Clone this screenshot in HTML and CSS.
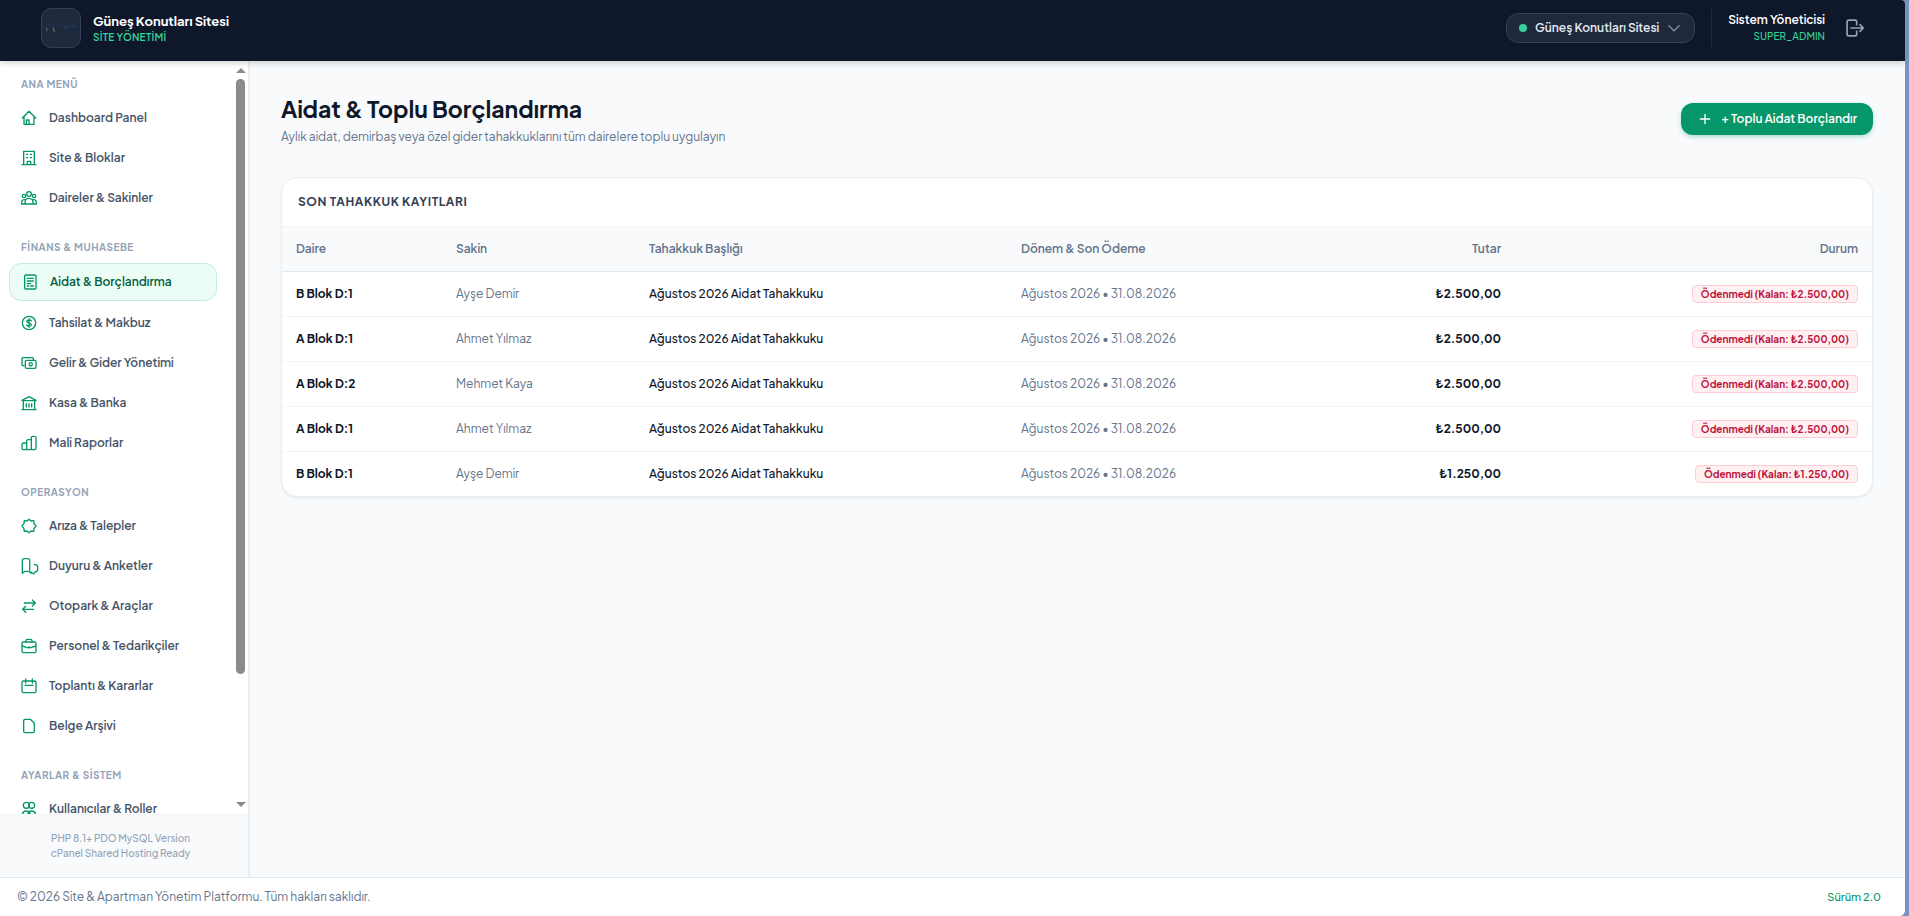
FILE: index.html
```
<!DOCTYPE html>
<html lang="tr">
<head>
    <meta charset="UTF-8">
    <meta name="viewport" content="width=device-width, initial-scale=1.0">
    <title>Aidat &amp; Toplu Borçlandırma</title>
    <link rel="stylesheet" href="styles.css">
</head>
<body>
    <div class="app">
        <header class="topbar">
            <a class="brand" href="#">
                <span class="brand-logo">
                    <svg viewBox="0 0 40 40">
                        <path d="M4 17q4-2 9 0M17 17h8" stroke="#22344f"/>
                        <path d="M5 20v3" stroke="#64748b"/>
                        <path d="M12 20l1 4" stroke="#7c8a6a"/>
                        <path d="M23 18l3 3 3-3M31 18h3" stroke="#1e4a86"/>
                    </svg>
                </span>
                <span class="brand-text">
                    <strong>Güneş Konutları Sitesi</strong>
                    <small>SİTE YÖNETİMİ</small>
                </span>
            </a>
            <div class="topbar-right">
                <button class="site-select" type="button">
                    <span class="dot"></span>
                    Güneş Konutları Sitesi
                    <svg class="icon" viewBox="0 0 24 24"><path d="M3 8l9 9 9-9"/></svg>
                </button>
                <div class="user">
                    <div class="user-text">
                        <strong>Sistem Yöneticisi</strong>
                        <small>SUPER_ADMIN</small>
                    </div>
                    <button class="logout" type="button" aria-label="Çıkış">
                        <svg viewBox="0 0 24 24"><path d="M14 8V4.500a2 2 0 0 0-2-2H4.500a2 2 0 0 0-2 2v15a2 2 0 0 0 2 2H12a2 2 0 0 0 2-2V16M7 12h15M18 8l4 4-4 4"/></svg>
                    </button>
                </div>
            </div>
        </header>

        <div class="layout">
            <aside class="sidebar">
                <div class="sidebar-body">
                    <nav class="menu">
                        <div class="menu-group">
                            <h2>ANA MENÜ</h2>
                            <ul>
                                <li><a href="#"><svg class="icon" viewBox="0 0 24 24"><path d="M2 12L12 2l10 10M4.500 10v11.500h15V10M8 21v-6h4v6"/></svg>Dashboard Panel</a></li>
                                <li><a href="#"><svg class="icon" viewBox="0 0 24 24"><path d="M1.500 22h21M4 22V2h16v20M9.500 22v-5h5v5M8 6.500h2M14 6.500h2M8 11.500h2M14 11.500h2"/></svg>Site &amp; Bloklar</a></li>
                                <li><a href="#"><svg class="icon" viewBox="0 0 24 24"><circle cx="12" cy="6" r="3.500"/><circle cx="4.500" cy="9" r="2.500"/><circle cx="19.500" cy="9" r="2.500"/><path d="M6 21v-2.500a6 6 0 0 1 12 0V21zM6 21H1v-3a4 4 0 0 1 5-3.500M18 21h5v-3a4 4 0 0 0-5-3.500"/></svg>Daireler &amp; Sakinler</a></li>
                            </ul>
                        </div>
                        <div class="menu-group">
                            <h2>FİNANS &amp; MUHASEBE</h2>
                            <ul>
                                <li><a class="active" href="#"><svg class="icon" viewBox="0 0 24 24"><rect x="4" y="1.500" width="17" height="21" rx="2"/><path d="M8 6.500h9M8 10.500h9M8 14.500h5M8 18h2M13 18h4"/></svg>Aidat &amp; Borçlandırma</a></li>
                                <li><a href="#"><svg class="icon" viewBox="0 0 24 24"><circle cx="12" cy="12" r="10"/><path d="M12 5.500v13M15.500 9c-1-2-7-2-7 .500s7 2 7 5-6 3-7 .500"/></svg>Tahsilat &amp; Makbuz</a></li>
                                <li><a href="#"><svg class="icon" viewBox="0 0 24 24"><path d="M4.500 16H3a1.500 1.500 0 0 1-1.500-1.500v-9A1.500 1.500 0 0 1 3 4h14a1.500 1.500 0 0 1 1.500 1.500V8"/><rect x="6.500" y="8" width="16" height="12" rx="2"/><circle cx="14.500" cy="14" r="2.500"/></svg>Gelir &amp; Gider Yönetimi</a></li>
                                <li><a href="#"><svg class="icon" viewBox="0 0 24 24"><path d="M1.500 8L12 2.500 22.500 8M2 8.500h20M3.500 9v12.500M20.500 9v12.500M1.500 22h21M8 13v5M12 13v5M16 13v5"/></svg>Kasa &amp; Banka</a></li>
                                <li><a href="#"><svg class="icon" viewBox="0 0 24 24"><path d="M8.500 22h-5a2 2 0 0 1-2-2v-6a2 2 0 0 1 2-2h5zM8.500 22V9a2 2 0 0 1 2-2h5v15zM15.500 22V4a2 2 0 0 1 2-2h3a2 2 0 0 1 2 2v16a2 2 0 0 1-2 2z"/></svg>Mali Raporlar</a></li>
                            </ul>
                        </div>
                        <div class="menu-group">
                            <h2>OPERASYON</h2>
                            <ul>
                                <li><a href="#"><svg class="icon" viewBox="0 0 24 24"><path d="M12 2l3 2.500 4-.500.500 4 3 4-3 4-.500 4-4-.500L12 22l-3-2.500-4 .500-.500-4-3-4 3-4L5 4l4 .500z"/></svg>Arıza &amp; Talepler</a></li>
                                <li><a href="#"><svg class="icon" viewBox="0 0 24 24"><path d="M2 23V4a3 3 0 0 1 3-3h5a3 3 0 0 1 3 3v14M2 23l4-3h6l3 3M20 10h1a4 4 0 0 1 4 4v3a4 4 0 0 1-4 4l-2 3-4-3"/></svg>Duyuru &amp; Anketler</a></li>
                                <li><a href="#"><svg class="icon" viewBox="0 0 24 24"><path d="M5 7.500h16M17 3l4.500 4.500L17 12M19 17H3M7 12.500L2.500 17 7 21.500"/></svg>Otopark &amp; Araçlar</a></li>
                                <li><a href="#"><svg class="icon" viewBox="0 0 24 24"><rect x="1.500" y="6" width="21" height="16" rx="2"/><path d="M7.500 6V4a2 2 0 0 1 2-2h5a2 2 0 0 1 2 2v2M2 12l7 2.500h6l7-2.500M12 13v2"/></svg>Personel &amp; Tedarikçiler</a></li>
                                <li><a href="#"><svg class="icon" viewBox="0 0 24 24"><rect x="1.500" y="4.500" width="21" height="17.500" rx="2"/><path d="M7 1.500v6M17 1.500v6M6 11h12"/></svg>Toplantı &amp; Kararlar</a></li>
                                <li><a href="#"><svg class="icon" viewBox="0 0 24 24"><path d="M6 2h8l6 6v12a2 2 0 0 1-2 2H6a2 2 0 0 1-2-2V4a2 2 0 0 1 2-2z"/></svg>Belge Arşivi</a></li>
                            </ul>
                        </div>
                        <div class="menu-group">
                            <h2>AYARLAR &amp; SİSTEM</h2>
                            <ul>
                                <li><a href="#"><svg class="icon" viewBox="0 0 24 24"><circle cx="8" cy="6.500" r="4.500"/><circle cx="16" cy="6.500" r="4.500"/><path d="M2 22c0-5 2.500-7 6-7s6 2 6 7M10 22c0-5 2.500-7 6-7s6 2 6 7"/></svg>Kullanıcılar &amp; Roller</a></li>
                            </ul>
                        </div>
                    </nav>
                    <div class="scrollbar">
                        <span class="arrow up"></span>
                        <div class="track"><div class="thumb"></div></div>
                        <span class="arrow down"></span>
                    </div>
                </div>
                <div class="sidebar-foot">
                    <p>PHP 8.1+ PDO MySQL Version</p>
                    <p>cPanel Shared Hosting Ready</p>
                </div>
            </aside>

            <main class="content">
                <div class="page-head">
                    <div>
                        <h1>Aidat &amp; Toplu Borçlandırma</h1>
                        <p>Aylık aidat, demirbaş veya özel gider tahakkuklarını tüm dairelere toplu uygulayın</p>
                    </div>
                    <button class="btn-add" type="button">
                        <svg class="icon" viewBox="0 0 24 24"><path d="M12 5v14M5 12h14"/></svg>
                        + Toplu Aidat Borçlandır
                    </button>
                </div>

                <section class="card">
                    <h3>SON TAHAKKUK KAYITLARI</h3>
                    <table>
                        <colgroup>
                            <col class="c-daire">
                            <col class="c-sakin">
                            <col class="c-baslik">
                            <col class="c-donem">
                            <col class="c-tutar">
                            <col class="c-durum">
                        </colgroup>
                        <thead>
                            <tr>
                                <th>Daire</th>
                                <th>Sakin</th>
                                <th>Tahakkuk Başlığı</th>
                                <th>Dönem &amp; Son Ödeme</th>
                                <th class="right">Tutar</th>
                                <th class="right">Durum</th>
                            </tr>
                        </thead>
                        <tbody>
                            <tr>
                                <td class="flat">B Blok D:1</td>
                                <td class="muted">Ayşe Demir</td>
                                <td>Ağustos 2026 Aidat Tahakkuku</td>
                                <td class="muted">Ağustos 2026 • 31.08.2026</td>
                                <td class="amount">₺2.500,00</td>
                                <td class="right"><span class="badge">Ödenmedi (Kalan: ₺2.500,00)</span></td>
                            </tr>
                            <tr>
                                <td class="flat">A Blok D:1</td>
                                <td class="muted">Ahmet Yılmaz</td>
                                <td>Ağustos 2026 Aidat Tahakkuku</td>
                                <td class="muted">Ağustos 2026 • 31.08.2026</td>
                                <td class="amount">₺2.500,00</td>
                                <td class="right"><span class="badge">Ödenmedi (Kalan: ₺2.500,00)</span></td>
                            </tr>
                            <tr>
                                <td class="flat">A Blok D:2</td>
                                <td class="muted">Mehmet Kaya</td>
                                <td>Ağustos 2026 Aidat Tahakkuku</td>
                                <td class="muted">Ağustos 2026 • 31.08.2026</td>
                                <td class="amount">₺2.500,00</td>
                                <td class="right"><span class="badge">Ödenmedi (Kalan: ₺2.500,00)</span></td>
                            </tr>
                            <tr>
                                <td class="flat">A Blok D:1</td>
                                <td class="muted">Ahmet Yılmaz</td>
                                <td>Ağustos 2026 Aidat Tahakkuku</td>
                                <td class="muted">Ağustos 2026 • 31.08.2026</td>
                                <td class="amount">₺2.500,00</td>
                                <td class="right"><span class="badge">Ödenmedi (Kalan: ₺2.500,00)</span></td>
                            </tr>
                            <tr>
                                <td class="flat">B Blok D:1</td>
                                <td class="muted">Ayşe Demir</td>
                                <td>Ağustos 2026 Aidat Tahakkuku</td>
                                <td class="muted">Ağustos 2026 • 31.08.2026</td>
                                <td class="amount">₺1.250,00</td>
                                <td class="right"><span class="badge">Ödenmedi (Kalan: ₺1.250,00)</span></td>
                            </tr>
                        </tbody>
                    </table>
                </section>
            </main>
        </div>

        <footer class="footer">
            <span>© 2026 Site &amp; Apartman Yönetim Platformu. Tüm hakları saklıdır.</span>
            <span class="version">Sürüm 2.0</span>
        </footer>
    </div>
</body>
</html>
```

FILE: styles.css
```
*{
    box-sizing: border-box;
    margin: 0;
    padding: 0;
}
body{
    height: 100vh;
    padding-right: 4px;
    background: #7893c0;
    font-family: "Plus Jakarta Sans", Inter, "Noto Sans", sans-serif;
    font-size: 12px;
    line-height: 16px;
    color: #0f172a;
}
ul{
    list-style: none;
}
a{
    color: inherit;
    text-decoration: none;
}
button{
    font: inherit;
    border: 0;
    background: none;
    cursor: pointer;
}
svg{
    display: block;
    fill: none;
    stroke: currentColor;
    stroke-width: 2;
    stroke-linecap: round;
    stroke-linejoin: round;
}
.icon{
    width: 16px;
    height: 16px;
    flex: none;
    overflow: visible;
}
.app{
    height: 100%;
    display: flex;
    flex-direction: column;
    background: #f8fafc;
    border-radius: 0 4px 6px 0;
    overflow: hidden;
}

/* topbar */
.topbar{
    display: flex;
    justify-content: space-between;
    align-items: center;
    padding: 8px 40px 13px 41px;
    background: #0f172a;
    color: #fff;
    box-shadow: 0 2px 6px rgba(15, 23, 42, 0.2);
    position: relative;
}
.brand{
    display: flex;
    align-items: center;
    gap: 12px;
}
.brand-logo{
    width: 40px;
    height: 40px;
    border: 1px solid #334155;
    border-radius: 10px;
    background: #1e293b;
    overflow: hidden;
}
.brand-logo svg{
    stroke-width: 1;
}
.brand-text strong,
.brand-text small{
    display: block;
}
.brand-text strong{
    font-size: 13px;
    line-height: 18px;
}
.brand-text small{
    font-size: 10px;
    line-height: 14px;
    font-weight: 600;
    letter-spacing: 0.025em;
    color: #34d399;
}
.topbar-right{
    display: flex;
    align-items: center;
    gap: 16px;
}
.site-select{
    display: flex;
    align-items: center;
    gap: 8px;
    height: 30px;
    padding: 0 12px;
    border: 1px solid #334155;
    border-radius: 12px;
    background: #1e293b;
    color: #e2e8f0;
    font-weight: 600;
}
.site-select .icon{
    width: 14px;
    margin-right: 1px;
    color: #94a3b8;
}
.dot{
    width: 8px;
    height: 8px;
    border-radius: 50%;
    background: #34d399;
}
.user{
    display: flex;
    align-items: center;
    gap: 20px;
    padding: 3px 0 3px 16px;
    border-left: 1px solid #1e293b;
}
.user-text{
    text-align: right;
}
.user-text strong,
.user-text small{
    display: block;
}
.user-text strong{
    font-weight: 600;
}
.user-text small{
    font-size: 10px;
    font-weight: 500;
    color: #34d399;
}
.logout{
    color: #94a3b8;
}
.logout svg{
    width: 20px;
    height: 20px;
}

/* layout */
.layout{
    flex: 1;
    min-height: 0;
    display: flex;
}
.sidebar{
    width: 250px;
    display: flex;
    flex-direction: column;
    flex: none;
    background: #fff;
    border-right: 2px solid #e9edf2;
}
.sidebar-body{
    flex: 1;
    min-height: 0;
    display: flex;
}
.menu{
    flex: 1;
    padding: 15px 19px 0 9px;
    overflow: hidden;
}
.menu-group{
    margin-bottom: 23px;
}
.menu h2{
    padding: 0 12px;
    margin-bottom: 8px;
    font-size: 10px;
    line-height: 16px;
    font-weight: 700;
    letter-spacing: 0.05em;
    color: #94a3b8;
}
.menu li{
    margin-bottom: 4px;
}
.menu li:last-child{
    margin-bottom: 0;
}
.menu a{
    display: flex;
    align-items: center;
    gap: 12px;
    padding: 10px 12px;
    border-radius: 12px;
    font-weight: 600;
    color: #475569;
}
.menu .icon{
    color: #059669;
}
.menu a.active{
    border: 1px solid #c5ecdc;
    background: #ecfdf5;
    color: #065f46;
}
.scrollbar{
    width: 9px;
    margin-right: 3px;
    padding: 7px 0;
    display: flex;
    flex-direction: column;
    align-items: center;
    gap: 6px;
}
.track{
    flex: 1;
    width: 9px;
}
.thumb{
    height: 83%;
    border-radius: 5px;
    background: #8b8b8b;
}
.arrow{
    border: 5px solid transparent;
}
.arrow.up{
    border-top: 0;
    border-bottom-color: #8b8b8b;
}
.arrow.down{
    border-bottom: 0;
    border-top-color: #8b8b8b;
}
.sidebar-foot{
    padding: 16px 7px 16px 0;
    border-top: 1px solid #f1f5f9;
    background: #f8fafc;
    font-size: 10px;
    line-height: 15px;
    font-weight: 500;
    text-align: center;
    color: #94a3b8;
}

/* content */
.content{
    flex: 1;
    min-width: 0;
    padding: 32px 32px 32px 31px;
}
.page-head{
    display: flex;
    justify-content: space-between;
    align-items: center;
    margin-bottom: 32px;
}
.page-head h1{
    font-size: 23px;
    line-height: 32px;
    font-weight: 700;
}
.page-head p{
    margin-top: 4px;
    color: #64748b;
}
.btn-add{
    display: flex;
    align-items: center;
    gap: 8px;
    height: 32px;
    padding: 0 16px;
    border-radius: 12px;
    background: #059669;
    color: #fff;
    font-weight: 600;
    box-shadow: 0 2px 4px rgba(5, 150, 105, 0.3);
}
.card{
    border: 1px solid #e9eef3;
    border-radius: 16px;
    background: #fff;
    box-shadow: 0 1px 2px rgba(15, 23, 42, 0.08);
    overflow: hidden;
}
.card h3{
    padding: 16px;
    font-size: 12px;
    line-height: 16px;
    font-weight: 700;
    letter-spacing: 0.05em;
    color: #334155;
}
table{
    width: 100%;
    table-layout: fixed;
    border-collapse: separate;
    border-spacing: 0;
}
.c-daire{
    width: 160px;
}
.c-sakin{
    width: 193px;
}
.c-baslik{
    width: 372px;
}
.c-donem{
    width: 236px;
}
.c-tutar{
    width: 272px;
}
.c-durum{
    width: 357px;
}
th,
td{
    padding: 0 14px;
    text-align: left;
}
th{
    height: 46px;
    border-top: 1px solid #f1f5f9;
    border-bottom: 1px solid #e2e8f0;
    background: #f8fafc;
    font-weight: 600;
    color: #64748b;
}
td{
    height: 45px;
    border-bottom: 1px solid #f1f5f9;
    font-weight: 500;
}
tbody tr:last-child td{
    height: 44px;
    border-bottom: 0;
}
.right,
.amount{
    text-align: right;
}
.flat,
.amount{
    font-weight: 700;
}
.muted{
    font-weight: 400;
    color: #64748b;
}
.badge{
    display: inline-block;
    padding: 0 8px;
    border: 1px solid #fecdd3;
    border-radius: 4px;
    background: #fff1f2;
    font-size: 10px;
    line-height: 16px;
    font-weight: 700;
    color: #be123c;
}

/* footer */
.footer{
    display: flex;
    justify-content: space-between;
    align-items: center;
    padding: 11px 24px 11px 17px;
    border-top: 1px solid #e2e8f0;
    background: #fff;
    color: #64748b;
}
.version{
    font-size: 11px;
    font-weight: 500;
    color: #059669;
}
```
